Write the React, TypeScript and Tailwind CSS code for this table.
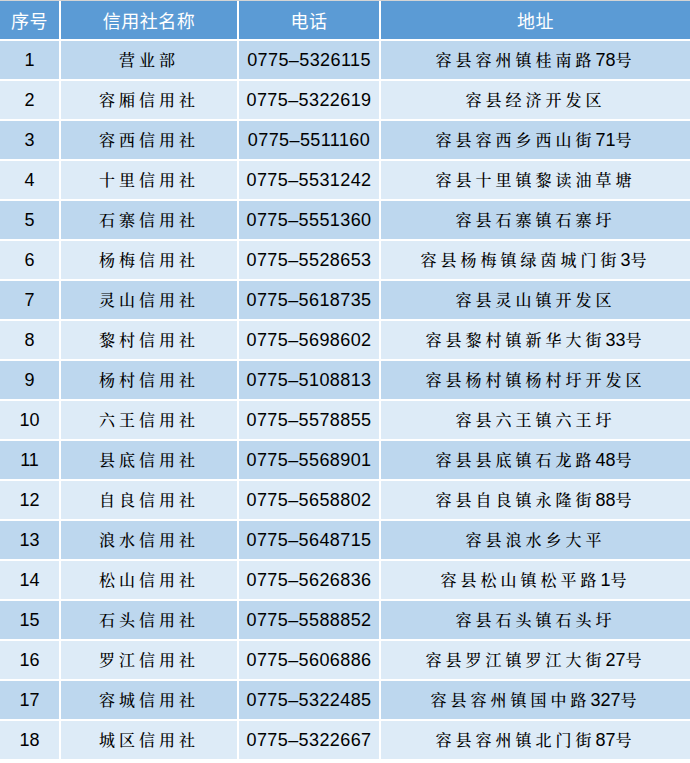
import React from 'react';

const rows: [string, string, string, string][] = [
  ['1', '营业部', '0775-5326115', '容县容州镇桂南路78号'],
  ['2', '容厢信用社', '0775-5322619', '容县经济开发区'],
  ['3', '容西信用社', '0775-5511160', '容县容西乡西山街71号'],
  ['4', '十里信用社', '0775-5531242', '容县十里镇黎读油草塘'],
  ['5', '石寨信用社', '0775-5551360', '容县石寨镇石寨圩'],
  ['6', '杨梅信用社', '0775-5528653', '容县杨梅镇绿茵城门街3号'],
  ['7', '灵山信用社', '0775-5618735', '容县灵山镇开发区'],
  ['8', '黎村信用社', '0775-5698602', '容县黎村镇新华大街33号'],
  ['9', '杨村信用社', '0775-5108813', '容县杨村镇杨村圩开发区'],
  ['10', '六王信用社', '0775-5578855', '容县六王镇六王圩'],
  ['11', '县底信用社', '0775-5568901', '容县县底镇石龙路48号'],
  ['12', '自良信用社', '0775-5658802', '容县自良镇永隆街88号'],
  ['13', '浪水信用社', '0775-5648715', '容县浪水乡大平'],
  ['14', '松山信用社', '0775-5626836', '容县松山镇松平路1号'],
  ['15', '石头信用社', '0775-5588852', '容县石头镇石头圩'],
  ['16', '罗江信用社', '0775-5606886', '容县罗江镇罗江大街27号'],
  ['17', '容城信用社', '0775-5322485', '容县容州镇国中路327号'],
  ['18', '城区信用社', '0775-5322667', '容县容州镇北门街87号'],
];

const cjk = "font-['Noto_Serif_CJK_SC','Noto_Sans_CJK_SC',serif]";
const latin = "font-['Liberation_Sans','Noto_Sans_CJK_SC',sans-serif]";

// CJK runs get wide letter spacing, digit runs stay tight
function Spaced({ text }: { text: string }) {
  const parts = text.match(/[0-9]+|[^0-9]+/g) || [];
  return (
    <span className="whitespace-nowrap">
      {parts.map((p, i) =>
        /[0-9]/.test(p) ? (
          <span key={i} className={`${latin} text-[18px]`}>{p}</span>
        ) : (
          <span key={i} className={`${cjk} text-[16px] font-medium tracking-[4px]`}>{p}</span>
        )
      )}
    </span>
  );
}

export default function App() {
  return (
    <div className="w-[690px] h-[763px] bg-white overflow-hidden border-t border-[#d4d4d4]">
      <div className="grid grid-cols-[59px_176px_140px_1fr] gap-x-[2px] gap-y-[2px] text-black">
        {['序号', '信用社名称', '电话', '地址'].map((h) => (
          <div
            key={h}
            className="h-[38px] bg-[#5b9bd5] flex items-center justify-center text-white text-[18px] tracking-[0.5px] font-['Noto_Sans_CJK_SC',sans-serif]"
          >
            {h}
          </div>
        ))}
        {rows.map((r, i) => {
          const bg = i % 2 === 0 ? 'bg-[#bdd7ee]' : 'bg-[#ddebf7]';
          return (
            <React.Fragment key={r[0]}>
              <div className={`${bg} h-[38px] flex items-center justify-center ${latin} text-[18px]`}>{r[0]}</div>
              <div className={`${bg} h-[38px] flex items-center justify-center`}>
                <Spaced text={r[1]} />
              </div>
              <div className={`${bg} h-[38px] flex items-center justify-center ${latin} text-[18px] tracking-[0.4px]`}>
                {r[2].replace('-', '–')}
              </div>
              <div className={`${bg} h-[38px] flex items-center justify-center`}>
                <Spaced text={r[3]} />
              </div>
            </React.Fragment>
          );
        })}
      </div>
    </div>
  );
}
